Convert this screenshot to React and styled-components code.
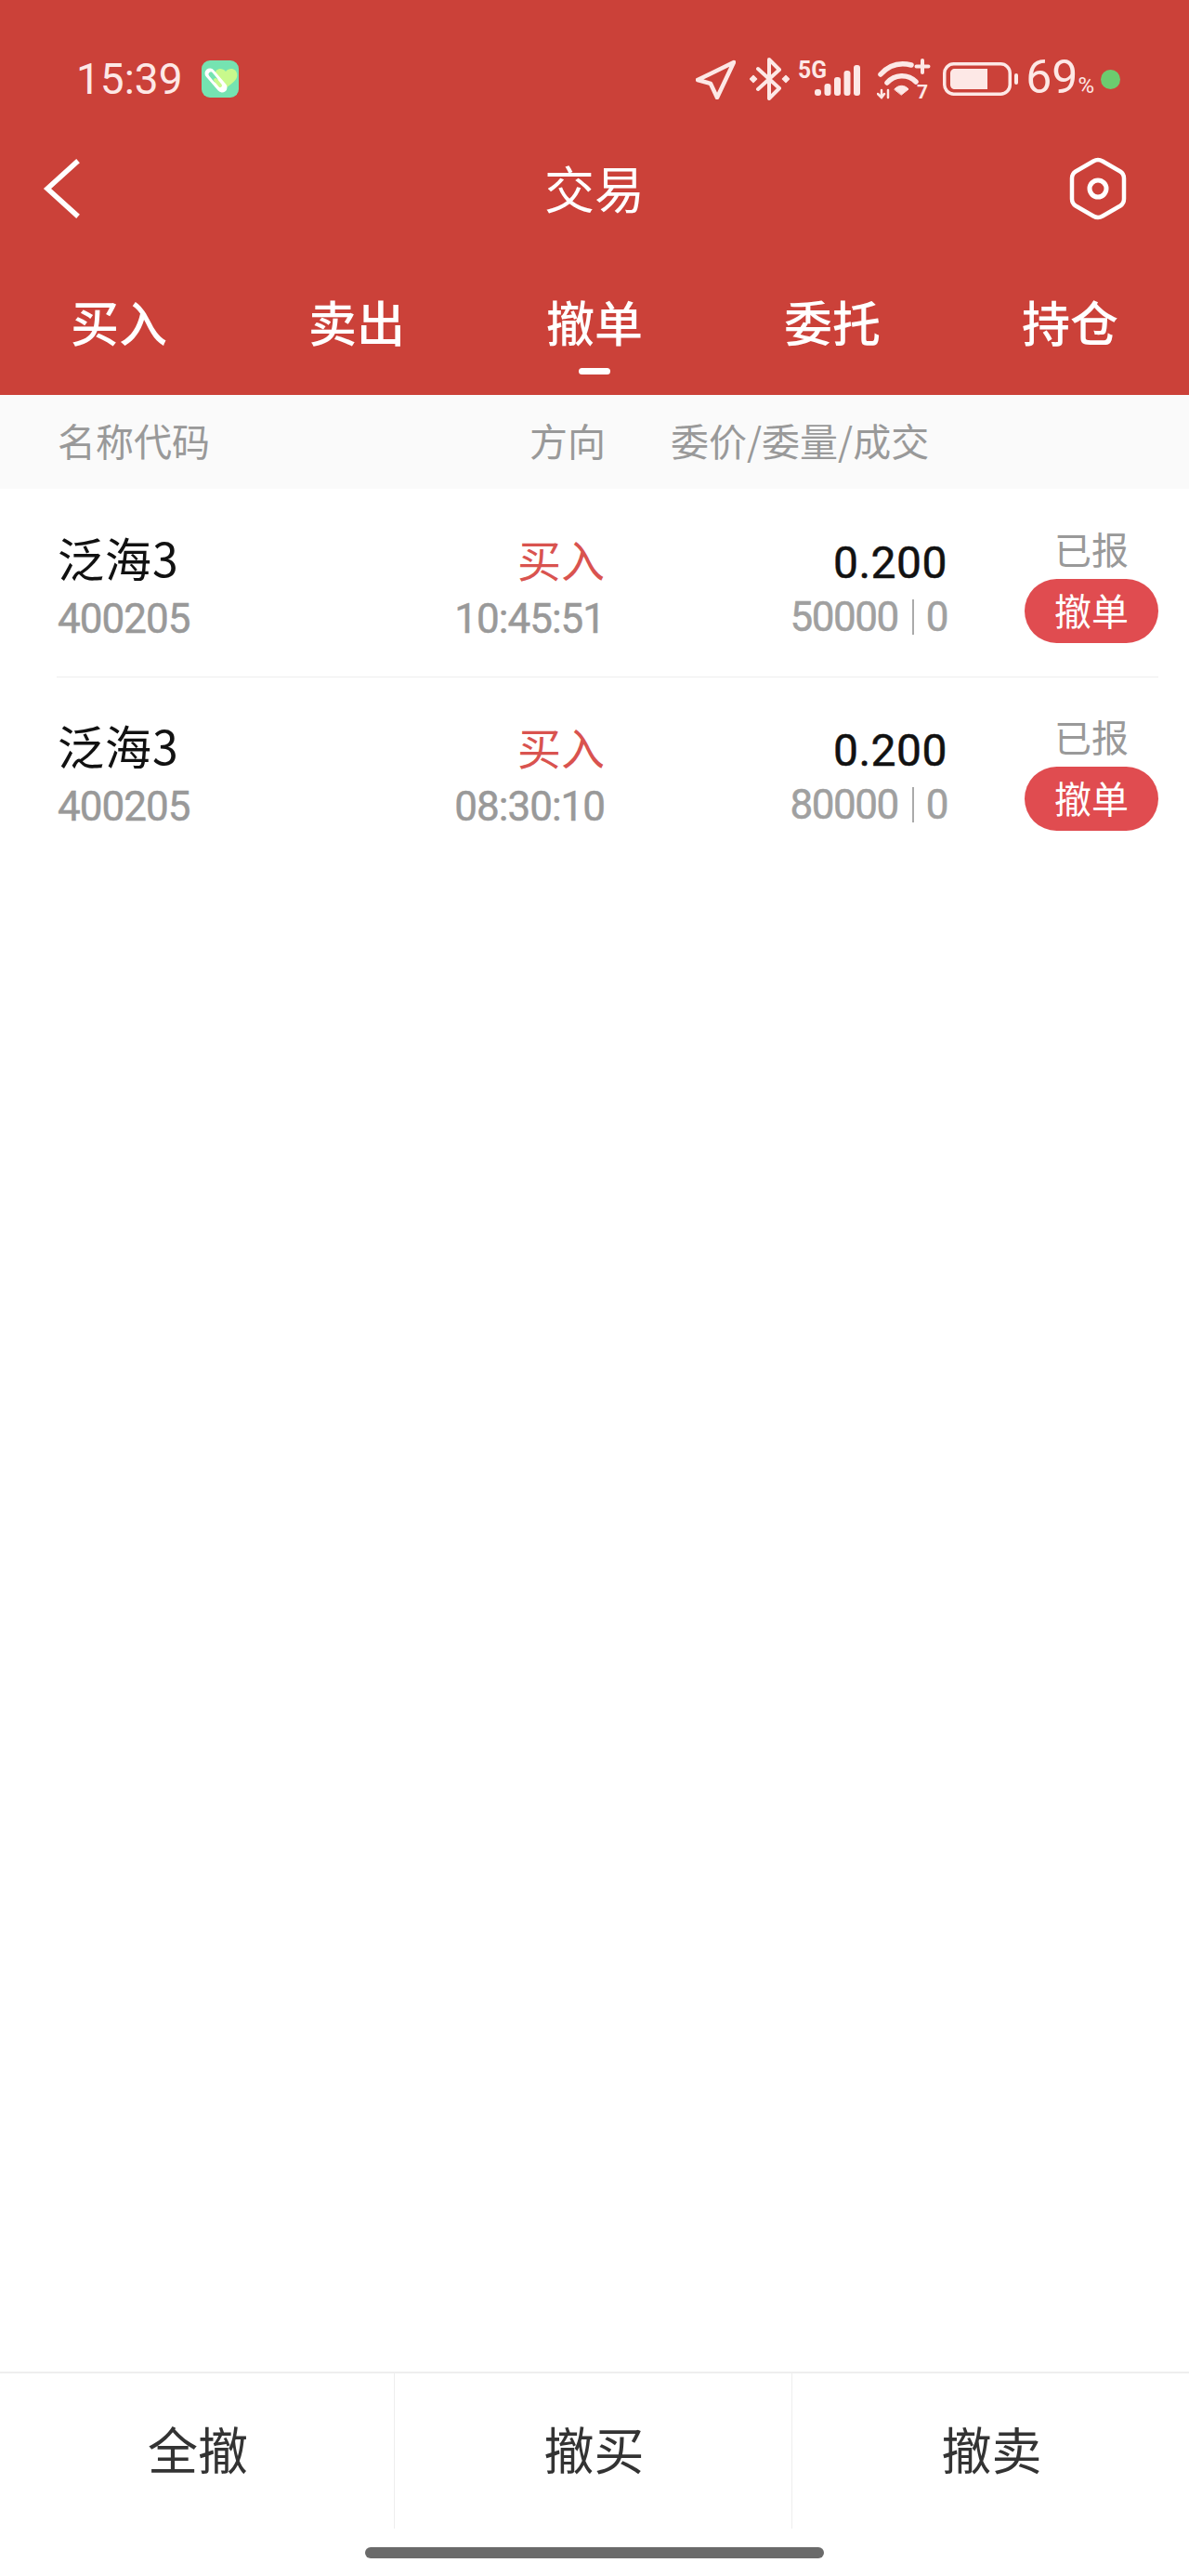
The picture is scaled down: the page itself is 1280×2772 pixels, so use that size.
import React from 'react';
import styled, { createGlobalStyle } from 'styled-components';

const orders = [
  { name: '泛海3', code: '400205', time: '10:45:51', price: '0.200', volume: '50000', filled: '0' },
  { name: '泛海3', code: '400205', time: '08:30:10', price: '0.200', volume: '80000', filled: '0' },
];

const tabs = ['买入', '卖出', '撤单', '委托', '持仓'];
const actions = ['全撤', '撤买', '撤卖'];

const AppIcon = () => (
  <svg width="40" height="40" viewBox="0 0 40 40">
    <rect width="40" height="40" rx="9" fill="#75e3b1" />
    <path d="M26 30 L15 18 C12 10 21 6 26 12 C31 6 40 10 38 18 C37 22 31 26 26 30 Z" fill="#c9f98c" />
    <line x1="9" y1="14" x2="22" y2="29" stroke="#fff" strokeWidth="11" strokeLinecap="round" />
    <line x1="10" y1="15" x2="15" y2="21" stroke="#75e3b1" strokeWidth="5" strokeLinecap="round" />
    <line x1="15" y1="21" x2="20" y2="27" stroke="#c9f98c" strokeWidth="4" strokeLinecap="round" />
  </svg>
);

const LocationIcon = () => (
  <svg width="43" height="43" viewBox="0 0 43 43" fill="none" stroke="#fde8e6" strokeWidth="4.5" strokeLinejoin="round">
    <path d="M41 3 L2 22 L16 26 L23 41 Z" />
  </svg>
);

const BluetoothIcon = () => (
  <svg width="43" height="46" viewBox="0 0 43 46" fill="none" stroke="#fde8e6" strokeWidth="4" strokeLinejoin="round" strokeLinecap="round">
    <path d="M9 12 L32 33 L21 44 V2 L32 13 L9 34" />
    <rect x="1.5" y="20.5" width="5" height="5" fill="#fde8e6" strokeWidth="1.5" transform="rotate(45 4 23)" />
    <rect x="36.5" y="20.5" width="5" height="5" fill="#fde8e6" strokeWidth="1.5" transform="rotate(45 39 23)" />
  </svg>
);

const SignalIcon = () => (
  <svg width="70" height="50" viewBox="0 -6 70 50" fill="#fde8e6">
    <text x="0" y="18" fontFamily="Roboto, sans-serif" fontWeight="700" fontSize="25" textLength="31" lengthAdjust="spacingAndGlyphs">5G</text>
    <rect x="18" y="30" width="7" height="7" rx="3" />
    <rect x="28.5" y="24" width="7" height="13" rx="3" />
    <rect x="39" y="17" width="7" height="20" rx="3" />
    <rect x="49.5" y="10" width="7" height="27" rx="3" />
    <rect x="60" y="4" width="7" height="33" rx="3" />
  </svg>
);

const WifiIcon = () => (
  <svg width="58" height="55" viewBox="0 -6 58 55" fill="none" stroke="#fde8e6" strokeLinecap="round">
    <path d="M4 16 C13 6 25 3 37 6" strokeWidth="5.5" />
    <path d="M11 25 C19 16 33 15 42 24" strokeWidth="5.5" />
    <path d="M19 32 C23 27 30 27 34 32 L26.5 38 Z" fill="#fde8e6" strokeWidth="1" strokeLinejoin="round" />
    <path d="M49 1 V14 M42.5 7.5 H55.5" strokeWidth="4" />
    <path d="M5 33 V41 M1 37 L5 41 L8 37 M12 33 V41" strokeWidth="2.5" />
    <text x="43" y="42" fill="#fde8e6" stroke="none" fontFamily="Roboto, sans-serif" fontWeight="700" fontSize="21">7</text>
  </svg>
);

const BatteryIcon = () => (
  <svg width="81" height="36" viewBox="0 0 81 36">
    <rect x="1.75" y="1.75" width="70.5" height="32.5" rx="10" fill="none" stroke="#fde8e6" strokeWidth="3.5" />
    <path d="M13 7 H48 V29 H13 C10 29 8 27 8 24 V12 C8 9 10 7 13 7 Z" fill="#fde8e6" />
    <rect x="77" y="12" width="4" height="12" rx="2" fill="#fde8e6" />
  </svg>
);

const BackIcon = () => (
  <svg width="44" height="70" viewBox="0 0 44 70" fill="none" stroke="#fff" strokeWidth="5.5" strokeLinecap="square">
    <polyline points="38,7 7,35 38,63" />
  </svg>
);

const SettingsIcon = () => (
  <svg width="62" height="68" viewBox="0 0 62 68" fill="none" stroke="#fff" strokeWidth="4.5" strokeLinejoin="round">
    <path d="M26 4.5 Q31 1.5 36 4.5 L55 15.5 Q59 18 59 23 V45 Q59 50 55 52.5 L36 63.5 Q31 66.5 26 63.5 L7 52.5 Q3 50 3 45 V23 Q3 18 7 15.5 Z" />
    <circle cx="31" cy="34" r="9" strokeWidth="5" />
  </svg>
);

const App = () => (
  <Page>
    <GlobalStyle />
    <Header>
      <StatusBar>
        <StatusLeft>
          <Clock>15:39</Clock>
          <AppIcon />
        </StatusLeft>
        <StatusRight>
          <StatusItem><LocationIcon /></StatusItem>
          <StatusItem gap={15}><BluetoothIcon /></StatusItem>
          <StatusItem gap={9}><SignalIcon /></StatusItem>
          <StatusItem gap={15}><WifiIcon /></StatusItem>
          <StatusItem gap={13}><BatteryIcon /></StatusItem>
          <StatusItem gap={8}><BatteryText>69<small>%</small></BatteryText></StatusItem>
          <StatusItem gap={7}><GreenDot /></StatusItem>
        </StatusRight>
      </StatusBar>
      <NavBar>
        <BackIcon />
        <Title>交易</Title>
        <NavRight><SettingsIcon /></NavRight>
      </NavBar>
      <Tabs>
        {tabs.map(tab => (
          <Tab key={tab} active={tab === '撤单'}>{tab}</Tab>
        ))}
      </Tabs>
    </Header>

    <TableHead>
      <span>名称代码</span>
      <HeadDirection>方向</HeadDirection>
      <span>委价/委量/成交</span>
    </TableHead>

    <List>
      {orders.map(order => (
        <Row key={order.time}>
          <NameCell>
            <Name>{order.name}</Name>
            <Code>{order.code}</Code>
          </NameCell>
          <DirectionCell>
            <Direction>买入</Direction>
            <Code>{order.time}</Code>
          </DirectionCell>
          <PriceCell>
            <Price>{order.price}</Price>
            <Volume>
              {order.volume}
              <VolumeSep />
              {order.filled}
            </Volume>
          </PriceCell>
          <StatusCell>
            <StatusText>已报</StatusText>
            <CancelButton>撤单</CancelButton>
          </StatusCell>
        </Row>
      ))}
    </List>

    <Footer>
      {actions.map(action => (
        <FooterButton key={action}>{action}</FooterButton>
      ))}
    </Footer>
    <HomeArea>
      <HomeBar />
    </HomeArea>
  </Page>
);

const GlobalStyle = createGlobalStyle`
  html, body {
    margin: 0;
    padding: 0;
    background: #fff;
  }

  body {
    font-family: Roboto, "Noto Sans CJK SC", sans-serif;
  }
`;

const Page = styled.div`
  width: 1280px;
  height: 2772px;
  display: flex;
  flex-direction: column;
  background: #fff;
  overflow: hidden;
`;

const Header = styled.header`
  background: #cb4139;
  height: 425px;
  display: flex;
  flex-direction: column;
`;

const StatusBar = styled.div`
  height: 135px;
  box-sizing: border-box;
  padding: 35px 74px 0 82px;
  display: flex;
  align-items: center;
  justify-content: space-between;
  color: #fde8e6;
`;

const StatusLeft = styled.div`
  display: flex;
  align-items: center;
  gap: 20px;
`;

const Clock = styled.span`
  font-family: Roboto, sans-serif;
  font-size: 46px;
  font-weight: 400;
  line-height: 50px;
`;

const StatusRight = styled.div`
  display: flex;
  align-items: center;
`;

const StatusItem = styled.div`
  display: flex;
  align-items: center;
  margin-left: ${props => props.gap || 0}px;
`;

const BatteryText = styled.span`
  padding-top: 4px;
  font-family: Roboto, sans-serif;
  font-size: 50px;
  line-height: 46px;

  small {
    font-size: 24px;
  }
`;

const GreenDot = styled.i`
  width: 21px;
  height: 21px;
  border-radius: 50%;
  background: #6ccb6f;
`;

const NavBar = styled.nav`
  height: 135px;
  padding: 0 44px;
  display: grid;
  grid-template-columns: 1fr auto 1fr;
  align-items: center;
`;

const Title = styled.h1`
  margin: 0 0 3px;
  color: #fff;
  font-family: "Noto Sans CJK SC", sans-serif;
  font-size: 54px;
  font-weight: 400;
`;

const NavRight = styled.div`
  display: flex;
  justify-content: flex-end;
  padding-right: 23px;
`;

const Tabs = styled.div`
  flex: 1;
  display: grid;
  grid-template-columns: repeat(5, 1fr);
`;

const Tab = styled.div`
  position: relative;
  padding-top: 44px;
  text-align: center;
  color: #fff;
  font-family: "Noto Sans CJK SC", sans-serif;
  font-size: 52px;
  font-weight: 500;
  line-height: 64px;

  &::after {
    content: '';
    display: ${props => (props.active ? 'block' : 'none')};
    position: absolute;
    left: 50%;
    top: 126px;
    width: 34px;
    height: 7px;
    margin-left: -17px;
    border-radius: 4px;
    background: #fff;
  }
`;

const TableHead = styled.div`
  height: 101px;
  box-sizing: border-box;
  padding: 0 62px 5px;
  display: grid;
  grid-template-columns: 338px 252px auto;
  align-items: center;
  background: #fafafa;
  color: #999;
  font-family: "Noto Sans CJK SC", sans-serif;
  font-size: 41px;

  span:last-child {
    margin-left: 70px;
  }
`;

const HeadDirection = styled.span`
  text-align: right;
`;

const List = styled.div`
  flex: 1;
  padding-top: 1px;
`;

const Row = styled.div`
  height: 202px;
  box-sizing: border-box;
  margin: 0 33px 0 61px;
  padding-left: 1px;
  display: grid;
  grid-template-columns: 338px 251px 369px 227px;
  border-bottom: 1px solid #eee;

  &:last-child {
    border-bottom: 0;
  }
`;

const NameCell = styled.div`
  padding-top: 42px;
  display: flex;
  flex-direction: column;
  gap: 7px;
`;

const Name = styled.div`
  color: #111;
  font-family: "Noto Sans CJK SC", sans-serif;
  font-size: 50px;
  line-height: 60px;
  letter-spacing: 1px;
`;

const Code = styled.div`
  color: #999;
  font-family: Roboto, sans-serif;
  font-size: 44px;
  font-weight: 400;
  line-height: 60px;
  letter-spacing: -1px;
  -webkit-text-stroke: 0.5px #999;
`;

const DirectionCell = styled.div`
  padding-top: 44px;
  display: flex;
  flex-direction: column;
  align-items: flex-end;
  gap: 5px;
`;

const Direction = styled.div`
  color: #d9534f;
  font-family: "Noto Sans CJK SC", sans-serif;
  font-size: 47px;
  line-height: 60px;
`;

const PriceCell = styled.div`
  padding-top: 49px;
  display: flex;
  flex-direction: column;
  align-items: flex-end;
`;

const Price = styled.div`
  color: #111;
  font-family: Roboto, sans-serif;
  font-size: 48px;
  font-weight: 400;
  line-height: 60px;
  letter-spacing: 0.5px;
  -webkit-text-stroke: 0.5px #111;
`;

const Volume = styled.div`
  display: flex;
  align-items: center;
  margin-top: -1px;
  color: #a0a0a0;
  font-family: Roboto, sans-serif;
  font-size: 44px;
  font-weight: 400;
  line-height: 58px;
  letter-spacing: -1.5px;
  -webkit-text-stroke: 0.5px #a0a0a0;
`;

const VolumeSep = styled.i`
  width: 2px;
  height: 38px;
  margin: 0 13px 0 15px;
  background: #aaa;
`;

const StatusCell = styled.div`
  padding-top: 38px;
  display: flex;
  flex-direction: column;
  align-items: flex-end;
`;

const StatusText = styled.div`
  width: 144px;
  text-align: center;
  color: #999;
  font-family: "Noto Sans CJK SC", sans-serif;
  font-size: 40px;
  line-height: 50px;
  margin-bottom: 8px;
`;

const CancelButton = styled.button`
  width: 144px;
  height: 69px;
  padding: 0 0 4px;
  border: 0;
  border-radius: 35px;
  background: #e04c50;
  color: #fff;
  font-family: "Noto Sans CJK SC", sans-serif;
  font-size: 40px;
  line-height: 60px;
`;

const Footer = styled.div`
  height: 167px;
  display: grid;
  grid-template-columns: 425px 428px 1fr;
  border-top: 2px solid #eee;
`;

const FooterButton = styled.div`
  display: flex;
  align-items: center;
  justify-content: center;
  padding: 0 0 7px 2px;
  color: #333;
  font-family: "Noto Sans CJK SC", sans-serif;
  font-size: 54px;
  border-right: 1px solid #eee;

  &:last-child {
    border-right: 0;
  }
`;

const HomeArea = styled.div`
  height: 51px;
  padding-top: 20px;
  box-sizing: border-box;
  display: flex;
  justify-content: center;
`;

const HomeBar = styled.div`
  width: 494px;
  height: 12px;
  border-radius: 6px;
  background: #6a6a6a;
`;

export default App;
